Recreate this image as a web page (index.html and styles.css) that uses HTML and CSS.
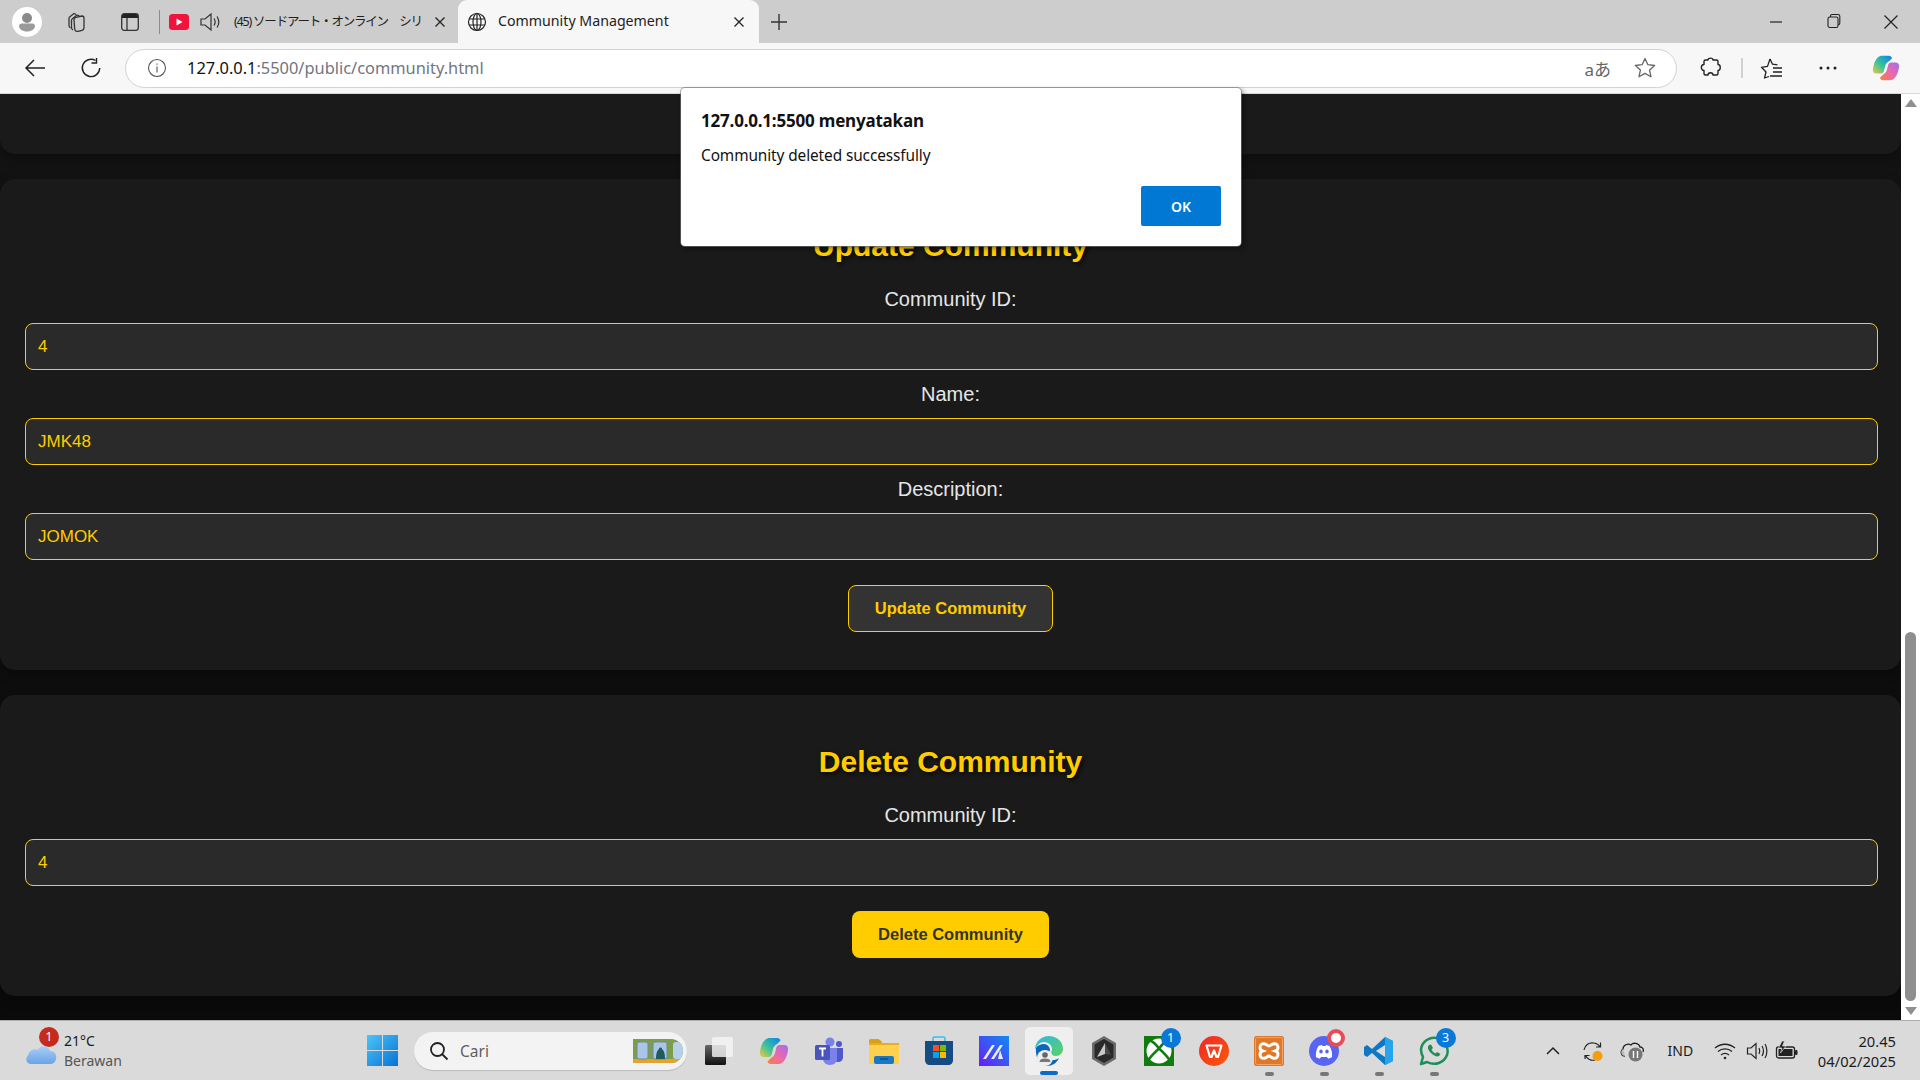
FILE: index.html
```html
<!DOCTYPE html>
<html lang="id">
<head>
<meta charset="utf-8">
<title>Community Management</title>
<link rel="stylesheet" href="styles.css">
</head>
<body>
<div class="window">
  <header class="tabbar">
    <div class="tb-icon avatar">
      <svg width="30" height="30" viewBox="0 0 30 30"><circle cx="15" cy="15" r="15" fill="#fff"/><circle cx="15" cy="11" r="5" fill="#8a8a8a"/><path d="M7 19c0-2 2-2.500 4-2.500h8c2 0 4 .5 4 2.500 0 3-3.500 5.500-8 5.500s-8-2.500-8-5.500z" fill="#9a9a9a"/></svg>
    </div>
    <div class="tb-icon workspaces">
      <svg width="22" height="22" viewBox="0 0 22 22" fill="none" stroke="#333" stroke-width="1.300"><path d="M2 6.500 7 2.500l2 1M4.500 8.500 10 4l2.500 1"/><path d="M7 8.500c0-1 .8-2 2-2.200l6-1.300c1.300 0 2 .8 2 2v10c0 1.200-.7 2-2 2.300l-4 1c-2 .3-3-.8-3.300-2z"/><path d="M2 6.500v8c0 1 .5 2 1.500 2.500M4.500 8.500v8c0 1 .5 2 1.500 2.500"/></svg>
    </div>
    <div class="tb-icon vtabs">
      <svg width="20" height="20" viewBox="0 0 20 20"><rect x="1.700" y="1.700" width="16.600" height="16.600" rx="2.500" fill="none" stroke="#333" stroke-width="1.300"/><path d="M2 4c0-1 1-2 2-2h12c1 0 2 1 2 2v2H2z" fill="#222"/><path d="M7 6v12" stroke="#333" stroke-width="1.300"/></svg>
    </div>
    <div class="tab-sep"></div>
    <div class="tab tab-bg">
      <svg class="yt" width="20" height="16" viewBox="0 0 20 16"><rect width="20" height="16" rx="3.500" fill="#f0133c"/><path d="M7.500 4.500v7l6-3.500z" fill="#fff"/></svg>
      <svg class="spk" width="22" height="20" viewBox="0 0 22 20" fill="none" stroke="#333" stroke-width="1.200"><path d="M2 7h4l6-5v16l-6-5H2z"/><path d="M15 6.500c1.300 2 1.300 5 0 7M18 4.500c2.200 3.300 2.200 7.700 0 11"/></svg>
      <span class="tab-title tab-jp">(45) ソードアート・オンライン　シリ</span>
      <svg class="tab-x" width="12" height="12" viewBox="0 0 12 12" stroke="#222" stroke-width="1.300"><path d="M1.500 1.500l9 9M10.500 1.500l-9 9"/></svg>
    </div>
    <div class="tab tab-active">
      <svg class="globe" width="20" height="20" viewBox="0 0 20 20" fill="none" stroke="#222" stroke-width="1.200"><circle cx="10" cy="10" r="8.500"/><ellipse cx="10" cy="10" rx="4" ry="8.500"/><path d="M2 7h16M2 13h16M10 1.500v17"/></svg>
      <span class="tab-title">Community Management</span>
      <svg class="tab-x" width="12" height="12" viewBox="0 0 12 12" stroke="#222" stroke-width="1.300"><path d="M1.500 1.500l9 9M10.500 1.500l-9 9"/></svg>
    </div>
    <div class="newtab">
      <svg width="18" height="18" viewBox="0 0 18 18" stroke="#333" stroke-width="1.400"><path d="M9 1v16M1 9h16"/></svg>
    </div>
    <div class="winctrls">
      <svg width="56" height="22" viewBox="0 0 14 22" stroke="#222" stroke-width="1.200"><path d="M1 11h12"/></svg>
      <svg width="56" height="22" viewBox="0 0 14 22" fill="none" stroke="#222" stroke-width="1.100"><rect x="1" y="6" width="10" height="10.500" rx="1.800"/><path d="M3.500 6V5c0-1 .7-1.500 1.500-1.500h6c1 0 1.800.7 1.800 1.800v7c0 1-.6 1.500-1.800 1.500"/></svg>
      <svg width="56" height="22" viewBox="0 0 14 22" stroke="#222" stroke-width="1.200"><path d="M.5 4.500l13 13M13.500 4.500l-13 13"/></svg>
    </div>
  </header>

  <nav class="toolbar">
    <svg class="nav-back" width="22" height="20" viewBox="0 0 22 20" fill="none" stroke="#222" stroke-width="1.500"><path d="M21 10H2M10 2l-8 8 8 8"/></svg>
    <svg class="nav-refresh" width="22" height="22" viewBox="0 0 22 22" fill="none" stroke="#222" stroke-width="1.400"><path d="M15.500 3.500A8.700 8.700 0 1 0 19.700 11"/><path d="M16.500 1v5h-5"/></svg>
    <div class="address">
      <svg class="addr-info" width="20" height="20" viewBox="0 0 20 20" fill="none" stroke="#555" stroke-width="1.100"><circle cx="10" cy="10" r="8.500"/><path d="M10 8.500v6M10 5.500v1.200"/></svg>
      <span class="url"><span class="url-host">127.0.0.1</span>:5500/public/community.html</span>
      <span class="addr-read">aあ</span>
      <svg class="addr-star" width="24" height="24" viewBox="0 0 24 24" fill="none" stroke="#666" stroke-width="1.300" stroke-linejoin="round"><path d="M12 2.500l2.900 6.200 6.700.8-5 4.600 1.400 6.700-6-3.400-6 3.400 1.400-6.700-5-4.600 6.700-.8z"/></svg>
    </div>
    <svg class="tool-puzzle" width="22" height="22" viewBox="0 0 22 22" fill="none" stroke="#222" stroke-width="1.400" stroke-linejoin="round"><path d="M8 3c0-2.500 5-2.500 5 0h3.500c1 0 1.500.6 1.500 1.500v3c3 0 3 6 0 6v3c0 1-.5 1.500-1.500 1.500H13c0-3-5-3-5 0H5.500C4.500 18 4 17.500 4 16.500V13.500c-3.500 0-3.500-6 0-6v-3C4 3.500 4.500 3 5.500 3z"/></svg>
    <div class="tool-sep"></div>
    <svg class="tool-fav" width="24" height="22" viewBox="0 0 24 22" fill="none" stroke="#222" stroke-width="1.300" stroke-linejoin="round"><path d="M10 2l2.500 5.200 5 .6M9 19.500l-4.500 1.500L6 15 1.500 10.300l6-.9L10 2"/><path d="M13 11h9M13 15h9M10 19h12"/></svg>
    <svg class="tool-dots" width="18" height="6" viewBox="0 0 18 6" fill="#222"><circle cx="2" cy="3" r="1.500"/><circle cx="9" cy="3" r="1.500"/><circle cx="16" cy="3" r="1.500"/></svg>
    <svg class="tool-copilot" width="28" height="28" viewBox="0 0 30 30">
      <defs>
        <linearGradient id="cpA" x1="0" y1="1" x2="1" y2="0"><stop offset="0" stop-color="#f7c63c"/><stop offset=".45" stop-color="#37c49a"/><stop offset="1" stop-color="#0f7df0"/></linearGradient>
        <linearGradient id="cpB" x1="1" y1="0" x2="0" y2="1"><stop offset="0" stop-color="#a66bf0"/><stop offset=".55" stop-color="#ee6aa6"/><stop offset="1" stop-color="#f9803a"/></linearGradient>
      </defs>
      <path d="M11 2h7c2 0 3 1 3.500 2.500L18 8c-2 1-3.500 3-4 5l-1.500 6c-.5 1-1.500 2-3 2H5c-3 0-4.500-2-4-5C2 9 4 6 6 4c1.500-1.500 3-2 5-2z" fill="url(#cpA)"/>
      <path d="M19 28h-7c-2 0-3-1-3.500-2.500L12 22c2-1 3.500-3 4-5l1.500-6c.5-1 1.500-2 3-2H25c3 0 4.500 2 4 5-1 7-3 10-5 12-1.500 1.500-3 2-5 2z" fill="url(#cpB)"/>
    </svg>
  </nav>

  <main class="viewport">
    <div class="content">
      <section class="card card-stub"></section>
      <section class="card">
        <h2 class="card-title">Update Community</h2>
        <label class="field-label">Community ID:</label>
        <div class="field-input">4</div>
        <label class="field-label">Name:</label>
        <div class="field-input">JMK48</div>
        <label class="field-label">Description:</label>
        <div class="field-input">JOMOK</div>
        <div class="actions"><button class="btn btn-outline">Update Community</button></div>
      </section>
      <section class="card">
        <h2 class="card-title">Delete Community</h2>
        <label class="field-label">Community ID:</label>
        <div class="field-input">4</div>
        <div class="actions"><button class="btn btn-solid">Delete Community</button></div>
      </section>
    </div>
    <aside class="scrollbar">
      <div class="sb-arrow"><svg width="14" height="10" viewBox="0 0 14 10"><path d="M7 1l6 8H1z" fill="#8f8f8f"/></svg></div>
      <div class="sb-track"></div>
      <div class="sb-thumb"></div>
      <div class="sb-arrow sb-bottom"><svg width="14" height="10" viewBox="0 0 14 10"><path d="M7 9L1 1h12z" fill="#8f8f8f"/></svg></div>
    </aside>
    <div class="dialog" role="alertdialog">
      <div class="dialog-title">127.0.0.1:5500 menyatakan</div>
      <div class="dialog-msg">Community deleted successfully</div>
      <div class="dialog-actions"><button class="dialog-ok">OK</button></div>
    </div>
  </main>

  <footer class="taskbar">
    <div class="tk-left">
      <div class="weather-icon">
        <svg width="34" height="26" viewBox="0 0 34 26"><defs><linearGradient id="cloud" x1="0" y1="0" x2="0" y2="1"><stop offset="0" stop-color="#a9cdf5"/><stop offset="1" stop-color="#6aa3e8"/></linearGradient></defs><path d="M7 24C2 24 1 18 4 15.500 5 10 11 8 14 10c2-5 10-5 12 1 5 0 7 4 6 8-.5 3-3 5-6 5z" fill="url(#cloud)"/></svg>
        <span class="weather-badge">1</span>
      </div>
      <div class="weather-text"><span class="w-temp">21°C</span><span class="w-desc">Berawan</span></div>
    </div>
    <svg class="start" width="31" height="31" viewBox="0 0 31 31">
      <defs><linearGradient id="win" x1="0" y1="0" x2="1" y2="1"><stop offset="0" stop-color="#4cc4fa"/><stop offset="1" stop-color="#0673d3"/></linearGradient></defs>
      <path d="M0 0h15v15H0zM16 0h15v15H16zM0 16h15v15H0zM16 16h15v15H16z" fill="url(#win)"/>
    </svg>
    <div class="search">
      <svg width="20" height="20" viewBox="0 0 20 20" fill="none" stroke="#222" stroke-width="1.800"><circle cx="8.500" cy="8.500" r="6.500"/><path d="M13 13l5.500 5.500"/></svg>
      <span class="search-text">Cari</span>
      <svg class="search-art" width="50" height="24" viewBox="0 0 50 24"><rect width="50" height="24" fill="#7e9d4a"/><rect y="20" width="50" height="4" fill="#e3a32e"/><rect x="4" y="3" width="11" height="17" rx="2" fill="#a9c6e6" stroke="#6d8a9e"/><rect x="20" y="3" width="14" height="17" rx="2" fill="#a9c6e6" stroke="#6d8a9e"/><path d="M23 20c0-6 1-8 3-10 0-2 3-2 3 0 2 2 3 4 3 10z" fill="#1f5a5e"/><rect x="40" y="3" width="10" height="17" rx="3" fill="#b6d0ea"/></svg>
    </div>
    <div class="tk-apps">
      <div class="app"><svg width="30" height="30" viewBox="0 0 30 30"><defs><linearGradient id="tvA" x1="0" y1="0" x2="0" y2="1"><stop offset="0" stop-color="#666"/><stop offset="1" stop-color="#111"/></linearGradient></defs><rect x="1" y="9" width="21" height="20" rx="1.500" fill="url(#tvA)"/><rect x="8" y="1" width="21" height="20" rx="1.500" fill="#f4f4f4" fill-opacity=".82"/></svg></div>
      <div class="app"><svg width="30" height="30" viewBox="0 0 30 30"><path d="M11 2h7c2 0 3 1 3.500 2.500L18 8c-2 1-3.500 3-4 5l-1.500 6c-.5 1-1.500 2-3 2H5c-3 0-4.500-2-4-5C2 9 4 6 6 4c1.500-1.500 3-2 5-2z" fill="url(#cpA)"/><path d="M19 28h-7c-2 0-3-1-3.500-2.500L12 22c2-1 3.500-3 4-5l1.500-6c.5-1 1.500-2 3-2H25c3 0 4.500 2 4 5-1 7-3 10-5 12-1.500 1.500-3 2-5 2z" fill="url(#cpB)"/></svg></div>
      <div class="app"><svg width="30" height="30" viewBox="0 0 30 30"><circle cx="16" cy="6" r="4.500" fill="#7b83eb"/><circle cx="25" cy="8" r="3" fill="#5059c9"/><path d="M21 12h8v9c0 3-2 5-5 5-1 0-2-.3-3-.8z" fill="#5059c9"/><path d="M9 12h14v11c0 3-3 6-7 6-4 0-7-3-7-6z" fill="#7b83eb"/><rect x="1" y="9" width="15" height="15" rx="1.500" fill="#4b53bc"/><path d="M5 12.500h7M8.500 12.500v8" stroke="#fff" stroke-width="1.800"/></svg></div>
      <div class="app"><svg width="30" height="30" viewBox="0 0 30 30"><path d="M0 4.500C0 3.500 1 3 2 3h7c1 0 2 1 3 2l1 1v3H0z" fill="#d9a00f"/><path d="M0 7h30v21H0z" fill="#fdd04d"/><path d="M0 7h30v2H0z" fill="#e9ad1f"/><rect x="5" y="20" width="20" height="8" rx="2" fill="#1a78c2"/><path d="M11 23h8" stroke="#0d4f8c" stroke-width="1.500"/></svg></div>
      <div class="app"><svg width="30" height="32" viewBox="0 0 30 32"><path d="M9 7V3.500c0-1 .5-1.500 1.500-1.500h9c1 0 1.500.5 1.500 1.500V7" fill="none" stroke="#35c1f1" stroke-width="1.600"/><path d="M1 6h28v19c0 3-2 5-5 5H6c-3 0-5-2-5-5z" fill="#164c82"/><rect x="9" y="10" width="6" height="6" fill="#f25022"/><rect x="16" y="10" width="6" height="6" fill="#7fba00"/><rect x="9" y="17" width="6" height="6" fill="#00a4ef"/><rect x="16" y="17" width="6" height="6" fill="#ffb900"/></svg></div>
      <div class="app"><svg width="30" height="30" viewBox="0 0 30 30"><defs><linearGradient id="ma" x1="0" y1="1" x2="1" y2="0"><stop offset="0" stop-color="#6a1cf5"/><stop offset="1" stop-color="#0f8cf2"/></linearGradient></defs><rect width="30" height="30" fill="url(#ma)"/><path d="M4 23L13 9h3l-9 14zM12 23L21 9h3l-9 14z" fill="#e8ecff"/><path d="M21 14l3 9h-5z" fill="#e8ecff"/></svg></div>
      <div class="app app-active"><svg width="30" height="32" viewBox="0 0 30 32"><defs><linearGradient id="edA" x1="0" y1="0" x2="1" y2="1"><stop offset="0" stop-color="#2fb7e8"/><stop offset="1" stop-color="#5bd35f"/></linearGradient></defs><path d="M1 15C1 6 8 1 15 1s14 5 14 13c0 4-3 7-7 7-3 0-5-1-5-3 0-1 1-2 1-4 0-4-4-7-8-7-4 0-7 3-9 8z" fill="url(#edA)"/><path d="M2 13c2-3 5-4 8-4 3 0 6 3 6 6 0 2-2 3-3 5-1 3 2 5 6 5 2 0 4-.5 6-2-2 5-7 8-12 8C7 31 1 24 2 13z" fill="#0c67b8"/><circle cx="11" cy="23" r="8" fill="#eee"/><circle cx="11" cy="20" r="2.800" fill="#666"/><path d="M5.500 27c0-2.500 2-3.500 5.500-3.500s5.500 1 5.500 3.500z" fill="#777"/></svg></div>
      <div class="app"><svg width="28" height="32" viewBox="0 0 28 32"><path d="M14 1l12 7v16l-12 7L2 24V8z" fill="#6b6b6b"/><path d="M14 4l9.500 5.500v13L14 28l-9.500-5.500v-13z" fill="#2a2a2a"/><path d="M15 8L7 22l8-3z" fill="#c9c9c9"/><path d="M15 8l6 12-6-1z" fill="#4a4a4a"/></svg></div>
      <div class="app"><svg width="30" height="30" viewBox="0 0 30 30"><rect width="30" height="30" fill="#107c10"/><circle cx="15" cy="15" r="12.500" fill="#fff"/><path d="M6 4.500c3 1 6 4 9 8 3-4 6-7 9-8M4 25c2-4 6-8 11-12.500C20 17 24 21 26 25" fill="none" stroke="#107c10" stroke-width="2.400"/></svg><span class="badge badge-blue">1</span></div>
      <div class="app"><svg width="30" height="30" viewBox="0 0 30 30"><defs><linearGradient id="wps" x1="0" y1="0" x2="1" y2="1"><stop offset="0" stop-color="#f0262a"/><stop offset="1" stop-color="#fb5a06"/></linearGradient></defs><circle cx="15" cy="15" r="15" fill="url(#wps)"/><path d="M7.500 9.500h15L19 21h-1.500L15 14.500 12.500 21H11z" fill="none" stroke="#fff" stroke-width="2.200" stroke-linejoin="round"/></svg></div>
      <div class="app app-run"><svg width="30" height="30" viewBox="0 0 30 30"><rect width="30" height="30" rx="2.500" fill="#e0782a"/><rect x="1.500" y="1.500" width="27" height="27" rx="2" fill="none" stroke="#f4a366"/><path d="M11 8c-3-1-5 1-5 3.500 0 2 1 3 2.500 3.500C7 15.500 6 17 6 18.500 6 21 8 23 11 22c2-.5 2.500-2 4-2s2 1.500 4 2c3 1 5-1 5-3.500 0-1.500-1-3-2.500-3.500 1.500-.5 2.500-1.500 2.500-3.500C24 9 22 7 19 8c-2 .5-2.500 2-4 2s-2-1.500-4-2z" fill="none" stroke="#fff" stroke-width="3"/></svg><span class="run-dot"></span></div>
      <div class="app app-run"><svg width="30" height="30" viewBox="0 0 30 30"><circle cx="15" cy="15" r="15" fill="#5865f2"/><path d="M7 21c-.5-4 .5-8 2.500-11 2-.8 3-1 3.500-1l.5 1h3l.5-1c.5 0 1.500.2 3.500 1 2 3 3 7 2.500 11-1.500 1-3 1.500-4 1.500l-1-1.500H12l-1 1.500c-1 0-2.500-.5-4-1.500z" fill="#fff"/><ellipse cx="12" cy="15.500" rx="1.700" ry="2" fill="#5865f2"/><ellipse cx="18" cy="15.500" rx="1.700" ry="2" fill="#5865f2"/></svg><span class="disc-dot"></span><span class="run-dot"></span></div>
      <div class="app app-run"><svg width="30" height="30" viewBox="0 0 30 30"><path d="M21 1l8 4v20l-8 4L8 17l-5 4-3-2V11l3-2 5 4z" fill="#0e78c5"/><path d="M21 1l8 4v20l-8 4z" fill="#27a5ec"/><path d="M21 9L12 15l9 6z" fill="#dcdcdc"/></svg><span class="run-dot"></span></div>
      <div class="app app-run"><svg width="30" height="30" viewBox="0 0 30 30" fill="none"><path d="M2 28l2-7C2 17 1.500 14 2.500 11 5 3 14 0 20.500 3 27 6 30 13 28 19c-3 8-12 11-20 7z" stroke="#1d8e57" stroke-width="2.500" stroke-linejoin="round"/><path d="M10 9c-2 2-1 5 2 8s6 4 8 3l1.500-2-3.500-2-1.500 1.500c-2-1-3-2-4-4L14 12l-2-3.500z" fill="#1d8e57"/></svg><span class="badge badge-blue">3</span><span class="run-dot"></span></div>
    </div>
    <div class="tray">
      <svg class="tr-chev" width="14" height="10" viewBox="0 0 14 10" fill="none" stroke="#222" stroke-width="1.500"><path d="M1 8l6-6 6 6"/></svg>
      <svg class="tr-sync" width="24" height="24" viewBox="0 0 24 24" fill="none" stroke="#222" stroke-width="1.200"><path d="M3 11c1-5 5-8 10-7 3 .5 5 2 6 4M19.500 3.500V8h-4.500M4 20v-3.500h4.500M4.500 16.500C6 20 10 22 14 21"/><circle cx="16.500" cy="17" r="5" fill="#f59e0b" stroke="none"/></svg>
      <svg class="tr-cloud" width="24" height="22" viewBox="0 0 24 22"><path d="M5 16C1 16 0 11 3 9c0-4 5-6 8-4 2-3 8-2 9 2 3 0 4 3 3 5" fill="none" stroke="#222" stroke-width="1.300"/><path d="M5 16c-4 0-5-5-2-7" fill="#bbb"/><circle cx="15.500" cy="14.500" r="7" fill="#777"/><path d="M13.500 11v7M17.500 11v7" stroke="#fff" stroke-width="1.400"/></svg>
      <span class="tr-lang">IND</span>
      <svg class="tr-wifi" width="22" height="18" viewBox="0 0 22 18" fill="none" stroke="#222" stroke-width="1.300"><path d="M1 6c6-5 14-5 20 0M4 9.500c4-3.500 10-3.500 14 0M7 13c2.500-2 5.500-2 8 0"/><circle cx="11" cy="16" r="1.300" fill="#222" stroke="none"/></svg>
      <svg class="tr-vol" width="22" height="20" viewBox="0 0 22 20" fill="none" stroke="#222" stroke-width="1.200"><path d="M1.500 7H5l5-4.500v15L5 13H1.500z"/><path d="M13 7c1 2 1 4 0 6M16 5c1.800 3 1.800 7 0 10M19 3c2.500 4 2.500 10 0 14"/></svg>
      <svg class="tr-batt" width="24" height="20" viewBox="0 0 24 20"><rect x="1.500" y="6" width="18" height="11" rx="2" fill="none" stroke="#222" stroke-width="1.300"/><rect x="3.500" y="8" width="14" height="7" fill="#222"/><rect x="20" y="9" width="2.500" height="5" rx="1" fill="#222"/><path d="M7 0L3.500 7H7L5.500 12 11 5H7.500L9.500 0z" fill="#222" stroke="#dadada" stroke-width=".7"/></svg>
      <div class="clock"><span>20.45</span><span>04/02/2025</span></div>
    </div>
  </footer>
</div>
</body>
</html>
```
FILE: styles.css
```css
* { box-sizing: border-box; }
html, body { margin: 0; height: 100%; overflow: hidden; }
body { font-family: "Noto Sans", "Noto Sans CJK JP", sans-serif; background: #ccc; }
svg { display: block; flex: none; }

.window { width: 1920px; height: 1080px; display: flex; flex-direction: column; }

/* tab strip */
.tabbar { height: 43px; flex: none; background: #cdcdcd; display: flex; align-items: center; padding-left: 12px; }
.tb-icon { display: flex; align-items: center; justify-content: center; }
.avatar { width: 30px; }
.workspaces { width: 22px; margin-left: 25px; }
.vtabs { width: 20px; margin-left: 31px; }
.tab-sep { width: 1px; height: 24px; background: #8c8c8c; margin-left: 19px; }
.tab { height: 43px; display: flex; align-items: center; font-size: 14px; color: #222; }
.tab-bg { width: 298px; padding-left: 9px; }
.spk { margin-left: 10px; }
.tab-title { white-space: nowrap; padding-bottom: 2px; }
.tab-jp { width: 194px; margin-left: 13px; font-size: 12.500px; letter-spacing: -1.200px; }
.tab-bg .tab-x { margin-left: 6px; }
.tab-active { width: 301px; background: #f7f7f7; border-radius: 9px 9px 0 0; padding-left: 9px; }
.tab-active .tab-title { width: 235px; margin-left: 11px; font-size: 14.200px; }
.newtab { margin-left: 11px; }
.winctrls { margin-left: auto; display: flex; align-items: center; padding-right: 1px; }
.winctrls svg:nth-child(1) { margin-right: 2px; }
.winctrls svg:nth-child(2) { margin-right: 1.500px; }

/* toolbar */
.toolbar { height: 51px; flex: none; background: #f7f7f7; border-bottom: 1px solid #d8d8d8; display: flex; align-items: center; padding-left: 24px; }
.nav-refresh { margin-left: 34px; }
.address { width: 1552px; height: 39px; margin-left: 23px; background: #fff; border: 1.500px solid #d3d3d3; border-radius: 20px; display: flex; align-items: center; padding-left: 21px; }
.url { margin-left: 20px; padding-bottom: 2px; font-size: 16.400px; color: #6f7680; white-space: nowrap; }
.url-host { color: #111; }
.addr-read { margin-left: auto; font-size: 17px; color: #666; }
.addr-star { margin-left: 22px; margin-right: 19px; }
.tool-puzzle { margin-left: 23px; }
.tool-sep { width: 2px; height: 20px; background: #d0d0d0; margin-left: 19px; }
.tool-fav { margin-left: 17px; }
.tool-dots { margin-left: 35px; }
.tool-copilot { margin-left: 35px; }

/* page */
.viewport { position: relative; height: 926px; flex: none; display: flex; }
.content { flex: 1; min-width: 0; height: 926px; overflow: hidden; background: linear-gradient(#131313, #0a0a0a); font-family: "Liberation Sans", Arial, sans-serif; }
.card { background: #1a1a1a; border-radius: 15px; padding: 38px 25px; margin-bottom: 25px; box-shadow: 0 4px 12px rgba(0,0,0,.3); }
.card-stub { height: 60px; padding: 0; border-radius: 0 0 15px 15px; }
.card-title { margin: 12px 0 26px; font-size: 30px; line-height: 33px; font-weight: 700; color: #ffcc00; text-align: center; text-shadow: 2px 2px 4px rgba(0,0,0,.75); }
.field-label { display: block; margin-bottom: 12px; font-size: 20px; line-height: 23px; color: #e6e6e6; text-align: center; }
.field-input { height: 47px; margin: 0 -2px 13px 0; padding: 0 12px; background: #2a2a2a; border: 1px solid #ffcc00; border-radius: 8px; color: #ffcc00; font-size: 17px; line-height: 45px; }
.actions { display: flex; justify-content: center; margin-top: 25px; }
.btn { height: 47px; padding: 0 26px; border-radius: 8px; font-family: inherit; font-size: 16.500px; font-weight: 700; }
.btn-outline { background: #333; border: 1px solid #ffcc00; color: #ffcc00; }
.btn-solid { background: #ffcc00; border: 0; color: #333; }

/* scrollbar */
.scrollbar { width: 19px; flex: none; background: #fff; display: flex; flex-direction: column; align-items: center; }
.sb-arrow { height: 18px; display: flex; align-items: center; justify-content: center; }
.sb-track { height: 520px; flex: none; }
.sb-thumb { width: 11px; height: 369px; flex: none; background: #8f8f8f; border-radius: 6px; }
.sb-bottom { margin-top: auto; }

/* alert */
.dialog { position: absolute; left: 681px; top: -6px; width: 560px; height: 158px; padding: 21px 20px 0 20px; background: #fff; border-radius: 4px; box-shadow: 0 0 0 1px rgba(120,120,120,.6), 2px 2px 5px rgba(0,0,0,.5); font-family: "Noto Sans", sans-serif; color: #111; display: flex; flex-direction: column; }
.dialog-title { font-size: 17px; line-height: 24px; font-weight: 700; letter-spacing: -.2px; }
.dialog-msg { margin-top: 13px; font-size: 15.400px; line-height: 20px; letter-spacing: -.1px; }
.dialog-actions { display: flex; justify-content: flex-end; margin-top: 20px; }
.dialog-ok { width: 80px; height: 40px; background: #0078d4; color: #fff; border: 0; border-radius: 2px; font-family: inherit; font-size: 14px; font-weight: 600; }

/* taskbar */
.taskbar { height: 60px; flex: none; background: #dadada; border-top: 1.500px solid #aeaeae; display: flex; align-items: center; color: #1c1c1c; }
.tk-left { width: 367px; flex: none; display: flex; align-items: center; padding-left: 24px; }
.weather-icon { position: relative; width: 34px; height: 26px; top: 2px; }
.weather-badge { position: absolute; left: 15px; top: -13px; width: 20px; height: 20px; border-radius: 50%; background: #c42b1c; color: #fff; font-size: 12px; line-height: 20px; text-align: center; }
.weather-text { margin-left: 6px; display: flex; flex-direction: column; font-size: 14px; line-height: 20px; }
.w-desc { color: #555; }
.search { width: 273px; height: 38px; flex: none; margin-left: 16px; padding: 0 4px 0 15px; background: #f3f3f3; border-radius: 19px; box-shadow: 0 1px 1px rgba(0,0,0,.15); display: flex; align-items: center; }
.search-text { margin-left: 11px; font-size: 15.500px; color: #5f5f5f; }
.search-art { margin-left: auto; border-radius: 0 12px 12px 0; }
.tk-apps { display: flex; margin-left: 4.500px; flex: none; }
.app { position: relative; width: 55px; height: 48px; display: flex; align-items: center; justify-content: center; }
.app-active { width: 48px; margin: 0 3.500px; background: #efefef; border-radius: 5px; }
.app-active::after { content: ""; position: absolute; left: 15px; bottom: 0; width: 18px; height: 4px; border-radius: 2px; background: #0a6cc4; }
.run-dot { position: absolute; left: 23px; bottom: -1px; width: 9px; height: 4px; border-radius: 2px; background: #777; }
.badge { position: absolute; left: 29px; top: 1px; width: 20px; height: 20px; border-radius: 50%; color: #fff; font-size: 12.500px; line-height: 20px; text-align: center; }
.badge-blue { background: #0a78d7; }
.disc-dot { position: absolute; left: 30px; top: 2px; width: 18px; height: 18px; border-radius: 50%; background: #fff; border: 4px solid #e84c5b; }

/* tray */
.tray { flex: 1; display: flex; align-items: center; padding-left: 84px; }
.tr-sync { margin-left: 21px; }
.tr-cloud { margin-left: 15px; }
.tr-lang { margin-left: 24px; font-size: 14px; }
.tr-wifi { margin-left: 21px; }
.tr-vol { margin-left: 10px; }
.tr-batt { margin-left: 7px; }
.clock { margin-left: auto; padding-right: 24px; display: flex; flex-direction: column; align-items: flex-end; font-size: 14.700px; line-height: 20px; }
```
